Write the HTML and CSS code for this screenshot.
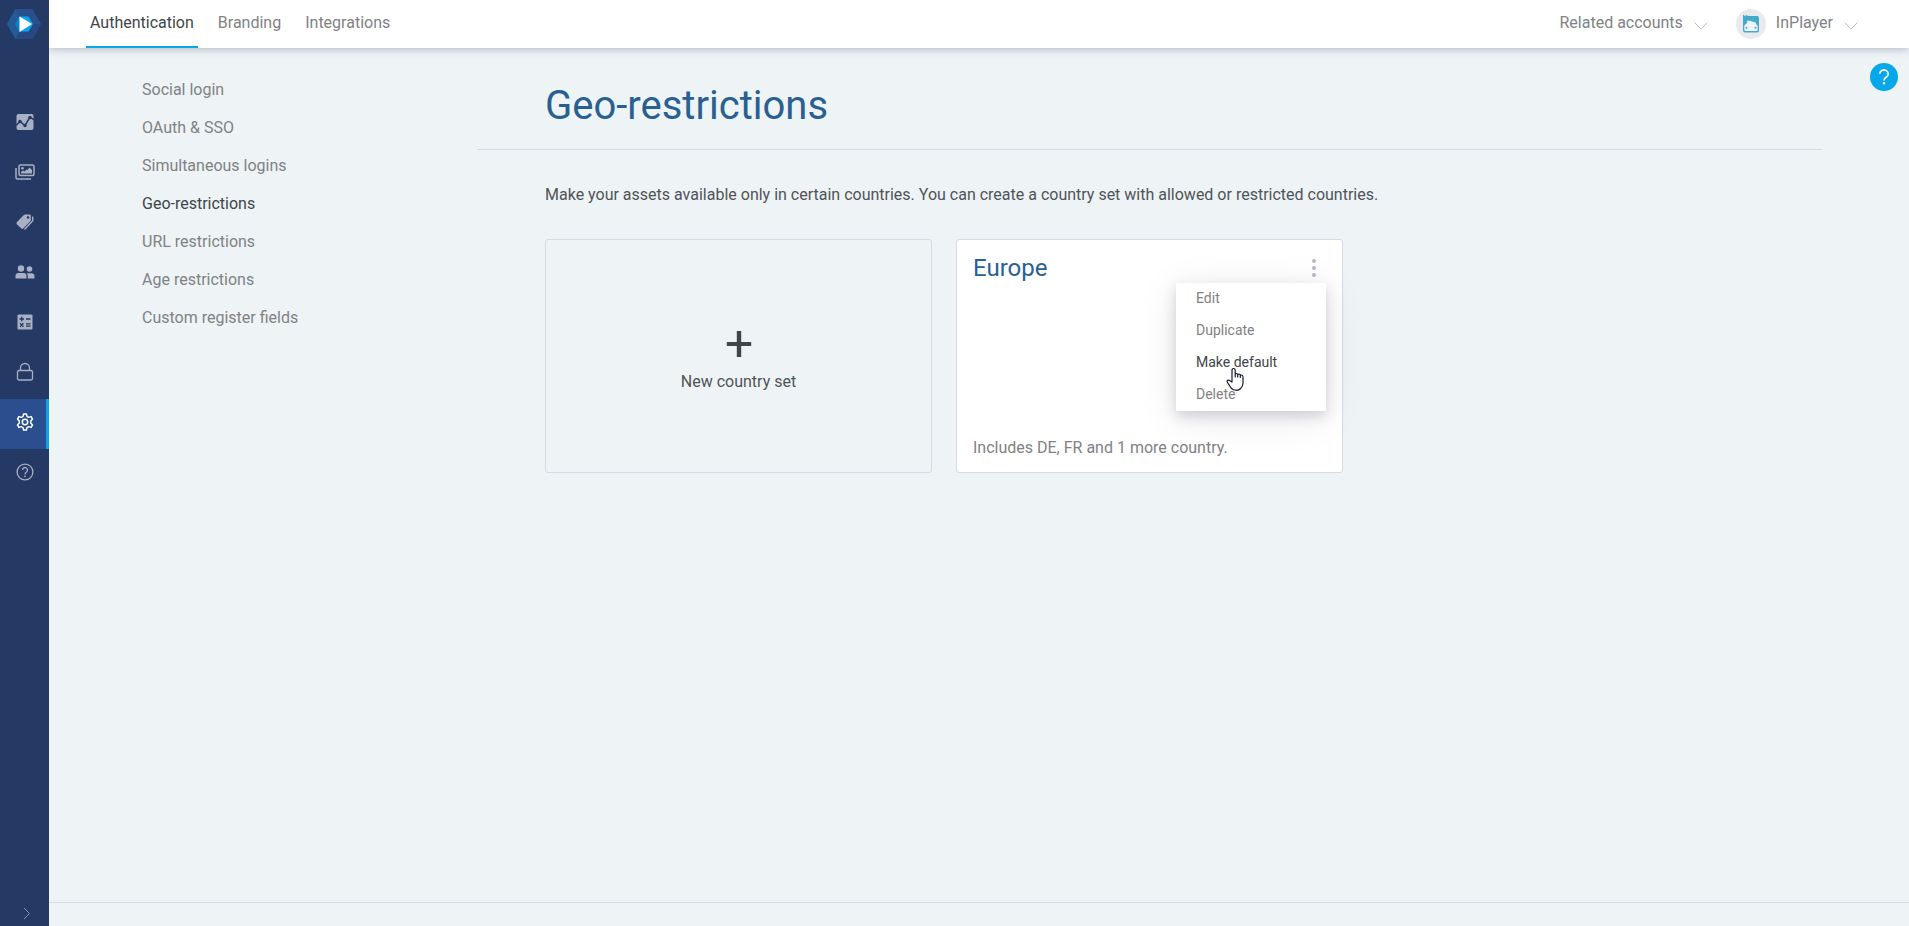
FILE: index.html
```html
<!DOCTYPE html>
<html lang="en">
<head>
<meta charset="utf-8">
<title>Geo-restrictions</title>
<meta name="viewport" content="width=device-width, initial-scale=1">
<link rel="stylesheet" href="styles.css">
</head>
<body>
<div class="app">
  <aside class="rail">
    <a class="logo" href="#" aria-label="Home">
      <svg width="34" height="30" viewBox="0 0 34 30">
        <path fill="#29508c" d="M8.500 0h17L34 15l-8.500 15h-17L0 15z"/>
        <path fill="#235a98" d="M8.500 0 17 15 8.500 30 0 15z"/>
        <path fill="#274882" d="M17 15h17l-8.500 15h-17z"/>
        <path fill="#0aa5e6" d="M12.500 7.500h9L26 15l-4.500 7.500h-9L8.500 15z"/>
        <path fill="#087fc4" d="M8.500 15l4-7.500v15z"/>
        <path fill="#fff" d="M12.500 7.500 25 15l-12.500 8z"/>
      </svg>
    </a>
    <nav class="rail-nav" aria-label="Main">
      <a class="rail-item" href="#" aria-label="Analytics">
        <svg width="18" height="18" viewBox="0 0 18 18"><rect x=".5" y="1" width="17" height="16" rx="2" fill="#a8b0c3"/><path d="M0 12.500 4 8.500l5 4 5-8.500 4 3" fill="none" stroke="#253965" stroke-width="1.500"/><circle cx="4" cy="8.500" r="1.700" fill="#253965"/><circle cx="9" cy="12.500" r="1.700" fill="#253965"/><circle cx="14" cy="4.500" r="1.700" fill="#253965"/></svg>
      </a>
      <a class="rail-item" href="#" aria-label="Assets">
        <svg width="20" height="18" viewBox="0 0 20 18"><g fill="none" stroke="#a8b0c3" stroke-width="1.500"><rect x="4" y="2" width="15" height="10.500" rx="1.500"/><path d="M1 5v9.500a1.500 1.500 0 0 0 1.500 1.500H16"/></g><circle cx="7.500" cy="5.300" r="1.300" fill="#a8b0c3"/><path fill="#a8b0c3" d="M6 10.500V9l2-1.500 1.500 1 2-2 1 .5L14.500 4.500 17 7v3.500z"/></svg>
      </a>
      <a class="rail-item" href="#" aria-label="Pricing">
        <svg width="18" height="18" viewBox="0 0 18 18"><path fill="#a8b0c3" fill-rule="evenodd" d="M.8 9.300 7.800 2q.5-.6 1.200-.6h4.500q1.300 0 1.300 1.300V7q0 .7-.5 1.200l-7 7.300q-1 .8-1.900 0L.8 11.200q-.8-1 0-1.900zM12 3.200a1.300 1.300 0 1 0 0 2.600 1.300 1.300 0 0 0 0-2.600z"/><path d="M16.700 3.500v4.300L8.500 16.500" fill="none" stroke="#a8b0c3" stroke-width="1.400"/></svg>
      </a>
      <a class="rail-item" href="#" aria-label="Customers">
        <svg width="20" height="16" viewBox="0 0 20 16"><g fill="#a8b0c3"><circle cx="6" cy="4.500" r="3.200"/><path d="M.5 14.500V12q0-3 3-3h5q3 0 3 3v2.500z"/><circle cx="14.500" cy="5" r="2.800"/><path d="M12.800 14.500V12q0-1.800-1.200-2.800h4.900q3 0 3 2.800v2.500z"/></g></svg>
      </a>
      <a class="rail-item" href="#" aria-label="Accounting">
        <svg width="16" height="16" viewBox="0 0 16 16"><rect x=".5" y=".5" width="15" height="15" rx="1" fill="#a8b0c3"/><path d="M2.500 5h4.500M4.750 2.750v4.500M9 5h4.500M9 9.800h4.500M9 12.200h4.500M3 9.300l3.500 3.500M6.500 9.300 3 12.800" fill="none" stroke="#253965" stroke-width="1.300"/></svg>
      </a>
      <a class="rail-item" href="#" aria-label="Security">
        <svg width="18" height="20" viewBox="0 0 18 20"><g fill="none" stroke="#a8b0c3" stroke-width="1.300"><rect x="1.500" y="8.500" width="15" height="9.500" rx="1.500"/><path d="M4.500 8.500V6a4.500 4.500 0 0 1 9 0v2.500"/></g></svg>
      </a>
      <a class="rail-item rail-item-active" href="#" aria-label="Settings" aria-current="page">
        <svg width="18" height="18" viewBox="0 0 18 18"><g fill="none" stroke="#fff" stroke-width="1.500" stroke-linejoin="round"><path d="M7.600 1h2.800l.6 2.400 1.700 1 2.400-.8 1.400 2.500L14.700 8v2l1.800 1.900-1.400 2.500-2.400-.8-1.700 1-.6 2.400H7.600L7 14.600l-1.700-1-2.400.8-1.400-2.500L3.300 10V8L1.500 6.100l1.400-2.500 2.400.8 1.700-1z"/><circle cx="9" cy="9" r="2.700"/></g></svg>
      </a>
      <a class="rail-item" href="#" aria-label="Help">
        <svg width="18" height="18" viewBox="0 0 18 18"><g fill="none" stroke="#a8b0c3" stroke-width="1.300"><circle cx="9" cy="9" r="7.900"/><path d="M6.500 7a2.500 2.500 0 1 1 4 2Q9 10 9 11.500"/></g><circle cx="9" cy="13.300" r=".9" fill="#a8b0c3"/></svg>
      </a>
    </nav>
    <button class="rail-toggle" type="button" aria-label="Expand menu">
      <svg width="8" height="14" viewBox="0 0 8 14"><path d="m1 2 5.500 5.500L1 13" fill="none" stroke="#8490ab"/></svg>
    </button>
  </aside>

  <div class="page">
    <header class="topbar">
      <nav class="tabs" aria-label="Settings">
        <a class="tab tab-active" href="#" aria-current="page">Authentication</a>
        <a class="tab" href="#">Branding</a>
        <a class="tab" href="#">Integrations</a>
      </nav>
      <div class="account">
        <button class="account-button" type="button">
          <span>Related accounts</span>
          <svg class="chevron" width="14" height="8" viewBox="0 0 14 8"><path d="m.5.500 6.500 6.500L13.500.5" fill="none" stroke="#bcc2cb"/></svg>
        </button>
        <button class="account-button" type="button">
          <svg class="avatar" width="30" height="30" viewBox="0 0 30 30"><circle cx="15" cy="15" r="15" fill="#e9eaee"/><path fill="#45a9cc" d="M7 5.500 9 7l2-1.300.5 1.300H21q2 0 2 2v12.500q0 2-2 2H9q-2 0-2-2z"/><path fill="#eef3f7" d="M8.300 16.500 11 14l.5-2.500 3 .5 5 1.500 1.500 3h.7v4.200q0 1.300-1.300 1.300H9.600q-1.300 0-1.300-1.300z"/><circle cx="10.500" cy="18.800" r="1" fill="#45a9cc"/><circle cx="19.500" cy="18.800" r="1" fill="#45a9cc"/></svg>
          <span>InPlayer</span>
          <svg class="chevron" width="14" height="8" viewBox="0 0 14 8"><path d="m.5.500 6.500 6.500L13.500.5" fill="none" stroke="#bcc2cb"/></svg>
        </button>
      </div>
      <button class="help" type="button" aria-label="Help">
        <svg width="12" height="16" viewBox="0 0 12 16"><path d="M1.800 4.800a4.200 3.900 0 1 1 7 2.900Q6 9.200 6 11.500" fill="none" stroke="#fff" stroke-width="1.600"/><circle cx="6" cy="14.300" r="1.200" fill="#fff"/></svg>
      </button>
    </header>

    <div class="body">
      <nav class="subnav" aria-label="Authentication">
        <a class="subnav-link" href="#">Social login</a>
        <a class="subnav-link" href="#">OAuth &amp; SSO</a>
        <a class="subnav-link" href="#">Simultaneous logins</a>
        <a class="subnav-link subnav-link-active" href="#" aria-current="page">Geo-restrictions</a>
        <a class="subnav-link" href="#">URL restrictions</a>
        <a class="subnav-link" href="#">Age restrictions</a>
        <a class="subnav-link" href="#">Custom register fields</a>
      </nav>
      <main class="content">
        <h1 class="title">Geo-restrictions</h1>
        <div class="section">
          <p class="intro">Make your assets available only in certain countries. You can create a country set with allowed or restricted countries.</p>
          <div class="cards">
            <button class="card card-new" type="button">
              <svg width="26" height="28" viewBox="0 0 26 28"><path fill="#40454a" d="M10.800 1h4.400v11h10v4h-10v11h-4.400V16H.8v-4h10z"/></svg>
              New country set
            </button>
            <article class="card card-set">
              <div class="card-head">
                <h2 class="card-title">Europe</h2>
                <button class="more" type="button" aria-label="Options" aria-expanded="true">
                  <svg width="4" height="18" viewBox="0 0 4 18" fill="#b5bac6"><circle cx="2" cy="2" r="2"/><circle cx="2" cy="9" r="2"/><circle cx="2" cy="16" r="2"/></svg>
                </button>
                <div class="menu">
                  <button class="menu-item" type="button">Edit</button>
                  <button class="menu-item" type="button">Duplicate</button>
                  <button class="menu-item menu-item-hover" type="button">Make default</button>
                  <button class="menu-item" type="button">Delete</button>
                  <svg class="pointer" width="20" height="25" viewBox="0 0 20 25"><path d="M6 15V3.200q0-1.700 1.600-1.700t1.600 1.700V10V7.500q0-1 1.200-1t1.300 1V10 8q0-1 1.300-1t1.300 1v2.500V9q0-1 1.200-1 1.500 0 1.500 2v6q0 3.500-2.500 5.500-1.500 1.800-4 1.800-4 0-5.500-2.500L1.500 15.500q-1-1.500.3-2.200 1.200-.6 2.400.6z" fill="#fff" stroke="#15182b" stroke-width="1.200" stroke-linejoin="round"/></svg>
                </div>
              </div>
              <p class="card-note">Includes DE, FR and 1 more country.</p>
            </article>
          </div>
        </div>
      </main>
    </div>
    <footer class="footer"></footer>
  </div>
</div>
</body>
</html>
```
FILE: styles.css
```css
* {
  box-sizing: border-box;
}

body {
  margin: 0;
  background: #eef3f6;
  color: #505458;
  font-family: Roboto, "Liberation Sans", sans-serif;
  font-size: 16px;
  line-height: 20px;
}

a {
  color: inherit;
  text-decoration: none;
}

button {
  padding: 0;
  border: 0;
  background: none;
  color: inherit;
  font: inherit;
  cursor: pointer;
}

svg {
  display: block;
  flex: none;
}

.app {
  display: flex;
  min-height: 100vh;
}

.rail {
  position: relative;
  z-index: 1;
  display: flex;
  flex: none;
  flex-direction: column;
  width: 49px;
  background: #253965;
}

.logo {
  display: flex;
  justify-content: center;
  padding: 9px 1px 60px 0;
}

.rail-item {
  display: flex;
  align-items: center;
  justify-content: center;
  height: 50px;
  padding: 0 0 4px 1px;
}

.rail-item-active {
  padding-left: 4px;
  border-right: 3px solid #07a8ea;
  background: #2b4f8e;
}

.rail-toggle {
  display: flex;
  justify-content: center;
  margin-top: auto;
  padding: 6px 0 6px 5px;
}

.page {
  display: flex;
  flex: 1;
  flex-direction: column;
  min-width: 0;
}

.topbar {
  position: relative;
  display: flex;
  justify-content: space-between;
  height: 48px;
  padding: 0 51px 0 37px;
  background: #fff;
  box-shadow: 0 1px 8px rgba(60, 70, 90, 0.35);
  color: #808285;
}

.tabs {
  display: flex;
  gap: 16px;
}

.tab {
  padding: 13px 4px;
  border-bottom: 2px solid transparent;
}

.tab-active {
  border-color: #07a8ea;
  color: #40454a;
}

.account {
  display: flex;
  gap: 28px;
}

.account-button {
  display: flex;
  align-items: center;
  height: 46px;
}

.chevron {
  margin: 6px 0 0 11px;
}

.avatar {
  margin: 2px 10px 0 0;
}

.help {
  position: absolute;
  top: 63px;
  right: 11px;
  display: flex;
  align-items: center;
  justify-content: center;
  width: 28px;
  height: 28px;
  border-radius: 50%;
  background: #07a8ea;
}

.body {
  display: grid;
  flex: 1;
  grid-template-columns: 335px 1fr;
  padding: 0 87px 0 93px;
}

.subnav {
  display: flex;
  flex-direction: column;
  gap: 18px;
  padding-top: 32px;
  color: #808285;
}

.subnav-link-active {
  color: #40454a;
}

.title {
  margin: 0;
  padding: 34px 68px 19px;
  border-bottom: 1px solid #d5dbe2;
  color: #286092;
  font-size: 40px;
  font-weight: 400;
  line-height: 48px;
}

.section {
  padding: 35px 68px;
}

.intro {
  margin: 0 0 34px;
}

.cards {
  display: grid;
  grid-template-columns: repeat(3, 1fr);
  gap: 24px;
}

.card {
  display: flex;
  flex-direction: column;
  min-height: 234px;
  border: 1px solid #d5dbe2;
  border-radius: 3px;
}

.card-new {
  align-items: center;
  justify-content: center;
  gap: 14px;
  padding-top: 10px;
}

.card-set {
  justify-content: space-between;
  padding: 14px 16px;
  background: #fff;
}

.card-head {
  position: relative;
  display: flex;
  align-items: center;
  justify-content: space-between;
}

.card-title {
  margin: 0;
  color: #286092;
  font-size: 24px;
  font-weight: 400;
  line-height: 28px;
}

.more {
  padding: 0 10px;
}

.menu {
  position: absolute;
  z-index: 1;
  top: 29px;
  right: 0;
  width: 150px;
  background: #fff;
  box-shadow: 0 5px 12px rgba(37, 37, 65, 0.18), 0 6px 36px rgba(37, 37, 65, 0.1);
}

.menu-item {
  display: block;
  width: 100%;
  height: 32px;
  padding: 0 20px 2px;
  color: #808285;
  font-size: 14px;
  text-align: left;
}

.menu-item-hover {
  color: #40454a;
}

.pointer {
  position: absolute;
  top: 84px;
  left: 50px;
}

.card-note {
  margin: 0;
  color: #808285;
}

.footer {
  height: 24px;
  border-top: 1px solid #d5dbe2;
}
```
